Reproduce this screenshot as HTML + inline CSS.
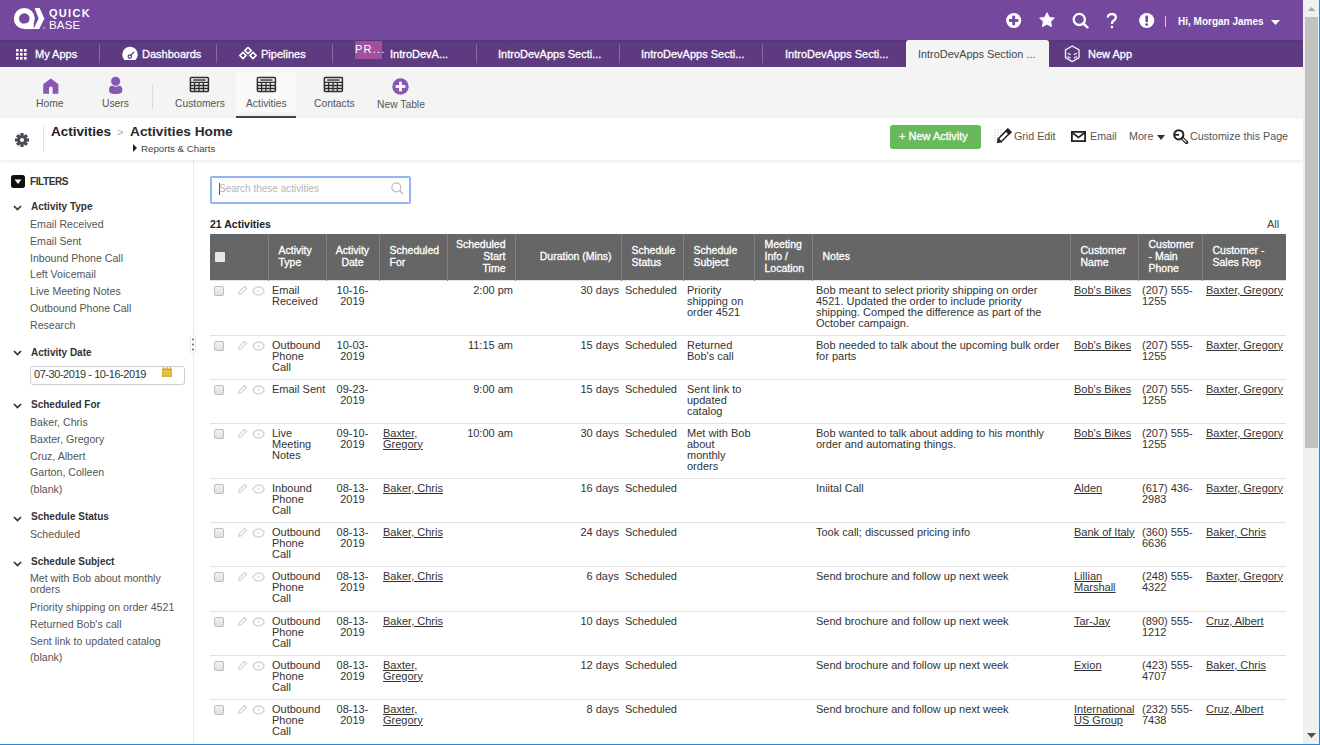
<!DOCTYPE html>
<html><head><meta charset="utf-8"><style>
*{box-sizing:border-box;margin:0;padding:0}
html,body{width:1320px;height:745px;overflow:hidden;background:#fff;font-family:"Liberation Sans",sans-serif;color:#333}
.a{position:absolute;white-space:nowrap}
#top{position:absolute;left:0;top:0;width:1303px;height:40px;background:#74489d}
#tabs{position:absolute;left:0;top:40px;width:1303px;height:27px;background:linear-gradient(#563579,#5e3a80 3px)}
#iconbar{position:absolute;left:0;top:67px;width:1303px;height:51px;background:#f4f4f4}
#phead{position:absolute;left:0;top:118px;width:1303px;height:42px;background:#fff;box-shadow:0 1px 4px rgba(0,0,0,0.10)}
#side{position:absolute;left:0;top:157px;width:194px;height:588px;border-right:1px solid #ebebeb;background:#fff}
#sb{position:absolute;left:1303px;top:0;width:16px;height:744px;background:#f0f0f0}
#thumb{position:absolute;left:1305px;top:17px;width:13px;height:431px;background:#c2c2c2}
.tt{position:absolute;color:#fff;font-size:11px;font-weight:normal;-webkit-text-stroke:0.3px #fff;white-space:nowrap;line-height:12px}
.tsep{position:absolute;top:44px;width:1px;height:19px;background:#8768a6}
.ilab{position:absolute;top:98px;font-size:10.3px;color:#555;white-space:nowrap;line-height:12px}
.act{position:absolute;top:130px;font-size:10.7px;color:#555;line-height:13px;white-space:nowrap}
.fh{position:absolute;left:31px;font-size:10px;font-weight:bold;color:#333;line-height:12px;white-space:nowrap}
.chev{position:absolute;left:13px}
.fi{position:absolute;left:30px;font-size:10.6px;color:#555;line-height:12px;white-space:nowrap}
table{position:absolute;left:210px;top:234px;border-collapse:collapse;table-layout:fixed;width:1076px}
th{background:#666;color:#fff;font-size:10.5px;font-weight:normal;-webkit-text-stroke:0.3px #fff;line-height:12px;letter-spacing:0px;height:46px;border-left:1px solid #808080;text-align:left;padding:0 0 1px 10px;vertical-align:middle;white-space:nowrap}
th:first-child{border-left:none}
td{font-size:11px;line-height:11px;vertical-align:top;padding:4px 0 0 4px;border-top:1px solid #e2e2e2;white-space:nowrap;color:#333;overflow:visible}
td u{text-decoration:underline}
td.r{text-align:right;padding-right:2px;padding-left:0}
th.r{text-align:right;padding-right:9px;padding-left:0}
.c{text-align:center;padding-left:0}
</style></head><body>
<div id="top"></div><div id="tabs"></div><div id="iconbar"></div><div id="side"></div><div id="phead"></div><div id="sb"></div><div id="thumb"></div>
<svg class="a" style="left:13px;top:7px" width="34" height="24" viewBox="0 0 34 24"><circle cx="11.3" cy="11.5" r="7.9" fill="none" stroke="#fff" stroke-width="5.2"/><rect x="11.3" y="16.5" width="9.5" height="5.6" fill="#fff"/><polygon points="21.6,1 26.6,1 31.4,11.6 26.2,22.1 20.6,22.1 25.6,11.6" fill="#fff"/><circle cx="31" cy="21" r="0.7" fill="#fff"/></svg>
<div class="a" style="left:49px;top:8px;font-size:11px;font-weight:bold;color:#fff;line-height:11px;letter-spacing:1.3px">QUICK</div>
<div class="a" style="left:49px;top:20px;font-size:11.5px;color:#fff;line-height:11px;letter-spacing:0.2px">BASE</div>
<svg class="a" style="left:1006px;top:12px" width="16" height="17" viewBox="0 0 16 17"><circle cx="7.7" cy="8.5" r="7.6" fill="#fff"/><rect x="6.3" y="3.8" width="2.8" height="9.4" fill="#74489d"/><rect x="3" y="7.1" width="9.4" height="2.8" fill="#74489d"/></svg>
<svg class="a" style="left:1039px;top:12px" width="16" height="16" viewBox="0 0 16 16"><polygon points="8.00,0.60 10.29,5.24 15.42,5.99 11.71,9.61 12.58,14.71 8.00,12.30 3.42,14.71 4.29,9.61 0.58,5.99 5.71,5.24" fill="#fff" stroke="#fff" stroke-width="0.8" stroke-linejoin="round"/></svg>
<svg class="a" style="left:1072px;top:12px" width="17" height="17" viewBox="0 0 17 17"><circle cx="7.3" cy="7.4" r="5.6" fill="none" stroke="#fff" stroke-width="2.3"/><line x1="11.2" y1="11.4" x2="15.4" y2="15.4" stroke="#fff" stroke-width="2.5" stroke-linecap="round"/></svg>
<svg class="a" style="left:1106px;top:13px" width="12" height="16" viewBox="0 0 12 16"><path d="M1.8,4.6 C1.8,2.2 3.6,1 5.7,1 C8,1 9.8,2.4 9.8,4.5 C9.8,6.4 8.4,7.2 7.2,8 C6.2,8.7 5.9,9.3 5.9,11" fill="none" stroke="#fff" stroke-width="2.3"/><circle cx="5.9" cy="14" r="1.3" fill="#fff"/></svg>
<svg class="a" style="left:1139px;top:12px" width="16" height="17" viewBox="0 0 16 17"><circle cx="7.7" cy="8.5" r="7.6" fill="#fff"/><rect x="6.4" y="3.6" width="2.6" height="6.6" rx="1" fill="#74489d"/><circle cx="7.7" cy="12.6" r="1.4" fill="#74489d"/></svg>
<div class="a" style="left:1165px;top:16px;width:1px;height:11px;background:#d8c8e6"></div>
<div class="a" style="left:1178px;top:16px;font-size:10px;font-weight:bold;color:#fff;line-height:12px">Hi, Morgan James</div>
<svg class="a" style="left:1271px;top:19.5px" width="9" height="5" viewBox="0 0 9 5"><polygon points="0,0 9,0 4.5,5" fill="#fff"/></svg>
<svg class="a" style="left:16px;top:49px" width="11" height="11" viewBox="0 0 11 11"><rect x="0" y="0" width="2.6" height="2.6" fill="#fff"/><rect x="0" y="4" width="2.6" height="2.6" fill="#fff"/><rect x="0" y="8" width="2.6" height="2.6" fill="#fff"/><rect x="4" y="0" width="2.6" height="2.6" fill="#fff"/><rect x="4" y="4" width="2.6" height="2.6" fill="#fff"/><rect x="4" y="8" width="2.6" height="2.6" fill="#fff"/><rect x="8" y="0" width="2.6" height="2.6" fill="#fff"/><rect x="8" y="4" width="2.6" height="2.6" fill="#fff"/><rect x="8" y="8" width="2.6" height="2.6" fill="#fff"/></svg>
<div class="tt" style="left:35px;top:48px">My Apps</div>
<div class="tsep" style="left:99px"></div>
<svg class="a" style="left:122px;top:46px" width="16" height="15" viewBox="0 0 16 15"><path d="M2.37,14 A7.8,7.8 0 1 1 13.63,14 Z" fill="#fff"/><circle cx="7.8" cy="10.6" r="1.7" fill="none" stroke="#5e3a80" stroke-width="1.2"/><line x1="8.9" y1="9.3" x2="11.9" y2="6.1" stroke="#5e3a80" stroke-width="1.3" stroke-linecap="round"/></svg>
<div class="tt" style="left:142px;top:48px">Dashboards</div>
<div class="tsep" style="left:216px"></div>
<svg class="a" style="left:239px;top:47px" width="18" height="13" viewBox="0 0 18 13"><rect x="6.8" y="1.2" width="4.4" height="4.4" transform="rotate(45 9 3.4)" fill="none" stroke="#fff" stroke-width="1.6"/><rect x="1.8" y="6.4" width="4.4" height="4.4" transform="rotate(45 4 8.6)" fill="none" stroke="#fff" stroke-width="1.6"/><rect x="11.8" y="6.4" width="4.4" height="4.4" transform="rotate(45 14 8.6)" fill="none" stroke="#fff" stroke-width="1.6"/></svg>
<div class="tt" style="left:261px;top:48px">Pipelines</div>
<div class="tsep" style="left:332px"></div>
<div class="a" style="left:355px;top:41px;width:27px;height:18px;background:#a24fa0"></div>
<div class="a" style="left:355px;top:44px;font-size:11px;color:#fff;letter-spacing:1.2px;line-height:11px">PR...</div>
<div class="tt" style="left:390px;top:48px">IntroDevA...</div>
<div class="tsep" style="left:476px"></div>
<div class="tt" style="left:498px;top:48px">IntroDevApps Secti...</div>
<div class="tsep" style="left:619px"></div>
<div class="tt" style="left:641px;top:48px">IntroDevApps Secti...</div>
<div class="tsep" style="left:762px"></div>
<div class="tt" style="left:785px;top:48px">IntroDevApps Secti...</div>
<div class="a" style="left:906px;top:40px;width:143px;height:27px;background:#f4f4f4;border-radius:3px 3px 0 0"></div>
<div class="a" style="left:918px;top:48px;font-size:10.9px;color:#444;line-height:12px">IntroDevApps Section ...</div>
<svg class="a" style="left:1064px;top:45px" width="17" height="18" viewBox="0 0 17 18"><polygon points="8.25,1 15,4.9 15,12.7 8.25,16.6 1.5,12.7 1.5,4.9" fill="none" stroke="#eee" stroke-width="1.4" stroke-linejoin="round"/><path d="M3.6,8.2 L6.6,9.6 M3.6,11.6 L6.6,13 M12.9,8.2 L9.9,9.6 M12.9,11.6 L9.9,13" stroke="#eee" stroke-width="1.2"/></svg>
<div class="tt" style="left:1088px;top:48px">New App</div>
<svg class="a" style="left:43px;top:78px" width="16" height="16" viewBox="0 0 16 16"><path d="M7.8,0.5 L15.4,6.3 V15.8 H9.7 V10.4 A1.85,1.85 0 0 0 6,10.4 V15.8 H0.2 V6.3 Z" fill="#8757b3"/></svg>
<div class="ilab" style="left:36px">Home</div>
<svg class="a" style="left:109px;top:76px" width="14" height="18" viewBox="0 0 14 18"><path d="M0,13.5 C0,11 1.5,9.6 4,9.6 H9.2 C11.7,9.6 13.3,11 13.3,13.5 V14.6 C13.3,16.8 11.6,17.9 9,17.9 H4.3 C1.7,17.9 0,16.8 0,14.6 Z" fill="#8757b3"/><circle cx="6.65" cy="5.3" r="5" fill="#8757b3" stroke="#f4f4f4" stroke-width="1"/></svg>
<div class="ilab" style="left:102px">Users</div>
<div class="a" style="left:152px;top:84px;width:1px;height:25px;background:#dcdcdc"></div>
<svg class="a" style="left:189px;top:76px" width="21" height="17" viewBox="0 0 21 17"><rect x="1.4" y="1.4" width="18" height="14" rx="0.8" fill="none" stroke="#2e2e2e" stroke-width="1.5"/><rect x="4.2" y="3.2" width="12.4" height="1.7" fill="#555"/><path d="M1.5,6.4 H19.4 M1.5,9.5 H19.4 M1.5,12.5 H19.4 M5.6,6.4 V15.4 M10,6.4 V15.4 M14.4,6.4 V15.4" stroke="#2e2e2e" stroke-width="1.3"/></svg>
<div class="ilab" style="left:175px">Customers</div>
<div class="a" style="left:236px;top:72px;width:60px;height:40px;background:#fafafa;border-radius:3px"></div>
<svg class="a" style="left:256px;top:76px" width="21" height="17" viewBox="0 0 21 17"><rect x="1.4" y="1.4" width="18" height="14" rx="0.8" fill="none" stroke="#2e2e2e" stroke-width="1.5"/><rect x="4.2" y="3.2" width="12.4" height="1.7" fill="#555"/><path d="M1.5,6.4 H19.4 M1.5,9.5 H19.4 M1.5,12.5 H19.4 M5.6,6.4 V15.4 M10,6.4 V15.4 M14.4,6.4 V15.4" stroke="#2e2e2e" stroke-width="1.3"/></svg>
<div class="ilab" style="left:246px">Activities</div>
<div class="a" style="left:236px;top:116px;width:60px;height:2px;background:#444"></div>
<svg class="a" style="left:323px;top:76px" width="21" height="17" viewBox="0 0 21 17"><rect x="1.4" y="1.4" width="18" height="14" rx="0.8" fill="none" stroke="#2e2e2e" stroke-width="1.5"/><rect x="4.2" y="3.2" width="12.4" height="1.7" fill="#555"/><path d="M1.5,6.4 H19.4 M1.5,9.5 H19.4 M1.5,12.5 H19.4 M5.6,6.4 V15.4 M10,6.4 V15.4 M14.4,6.4 V15.4" stroke="#2e2e2e" stroke-width="1.3"/></svg>
<div class="ilab" style="left:314px">Contacts</div>
<svg class="a" style="left:392px;top:78px" width="17" height="17" viewBox="0 0 17 17"><circle cx="8.5" cy="8.5" r="8.2" fill="#8757b3"/><rect x="7.1" y="3.6" width="2.8" height="9.8" fill="#fff"/><rect x="3.6" y="7.1" width="9.8" height="2.8" fill="#fff"/></svg>
<div class="ilab" style="left:377px;top:99px">New Table</div>
<svg class="a" style="left:15px;top:133px" width="14" height="14" viewBox="0 0 14 14"><g transform="translate(7 7)" fill="#4a4a52"><rect x="-1.6" y="-7" width="3.2" height="3.4" transform="rotate(0)"/><rect x="-1.6" y="-7" width="3.2" height="3.4" transform="rotate(45)"/><rect x="-1.6" y="-7" width="3.2" height="3.4" transform="rotate(90)"/><rect x="-1.6" y="-7" width="3.2" height="3.4" transform="rotate(135)"/><rect x="-1.6" y="-7" width="3.2" height="3.4" transform="rotate(180)"/><rect x="-1.6" y="-7" width="3.2" height="3.4" transform="rotate(225)"/><rect x="-1.6" y="-7" width="3.2" height="3.4" transform="rotate(270)"/><rect x="-1.6" y="-7" width="3.2" height="3.4" transform="rotate(315)"/><circle r="4.8"/></g><circle cx="7" cy="7" r="2" fill="#fff"/></svg>
<div class="a" style="left:43px;top:125px;width:1px;height:27px;background:#e0e0e0"></div>
<div class="a" style="left:51px;top:124px;font-size:13.5px;font-weight:bold;color:#222;line-height:16px">Activities</div>
<div class="a" style="left:117px;top:125px;font-size:11px;color:#aaa;line-height:14px">&gt;</div>
<div class="a" style="left:130px;top:124px;font-size:13.7px;font-weight:bold;color:#2a2a2a;line-height:16px">Activities Home</div>
<svg class="a" style="left:133px;top:144px" width="4" height="8" viewBox="0 0 4 8"><polygon points="0,0 4,4 0,8" fill="#222"/></svg>
<div class="a" style="left:141px;top:143px;font-size:9.7px;color:#444;line-height:12px">Reports &amp; Charts</div>
<div class="a" style="left:890px;top:125px;width:91px;height:24px;background:#67b95b;border-radius:3px"></div>
<div class="a" style="left:899px;top:130px;font-size:11px;font-weight:normal;-webkit-text-stroke:0.3px #fff;color:#fff;line-height:13px;letter-spacing:0px">+ New Activity</div>
<svg class="a" style="left:994px;top:128px" width="19" height="16" viewBox="0 0 19 16"><rect x="0.5" y="0.8" width="1.6" height="1.6" fill="#e2e2e2"/><rect x="0.5" y="3.6" width="1.6" height="1.6" fill="#e2e2e2"/><rect x="0.5" y="6.4" width="1.6" height="1.6" fill="#e2e2e2"/><rect x="0.5" y="9.2" width="1.6" height="1.6" fill="#e2e2e2"/><rect x="0.5" y="12.0" width="1.6" height="1.6" fill="#e2e2e2"/><rect x="3.3" y="0.8" width="1.6" height="1.6" fill="#e2e2e2"/><rect x="3.3" y="3.6" width="1.6" height="1.6" fill="#e2e2e2"/><rect x="3.3" y="6.4" width="1.6" height="1.6" fill="#e2e2e2"/><rect x="3.3" y="9.2" width="1.6" height="1.6" fill="#e2e2e2"/><rect x="3.3" y="12.0" width="1.6" height="1.6" fill="#e2e2e2"/><rect x="6.1" y="0.8" width="1.6" height="1.6" fill="#e2e2e2"/><rect x="6.1" y="3.6" width="1.6" height="1.6" fill="#e2e2e2"/><rect x="6.1" y="6.4" width="1.6" height="1.6" fill="#e2e2e2"/><rect x="6.1" y="9.2" width="1.6" height="1.6" fill="#e2e2e2"/><rect x="6.1" y="12.0" width="1.6" height="1.6" fill="#e2e2e2"/><g transform="translate(3.2 14.8) rotate(-45)"><rect x="3.6" y="-2.1" width="13.6" height="4.2" fill="#fff" stroke="#222" stroke-width="1.5"/><rect x="14" y="-2.85" width="3.9" height="5.7" fill="#222"/><polygon points="-0.6,0 3.6,-2.85 3.6,2.85" fill="#222"/></g></svg>
<div class="act" style="left:1014px">Grid Edit</div>
<svg class="a" style="left:1071px;top:131px" width="15" height="11" viewBox="0 0 15 11"><rect x="0.9" y="0.9" width="13.2" height="9.2" fill="none" stroke="#222" stroke-width="1.8"/><path d="M1,1.5 L7.5,6.5 L14,1.5" fill="none" stroke="#222" stroke-width="1.6"/></svg>
<div class="act" style="left:1090px">Email</div>
<div class="act" style="left:1129px">More</div>
<svg class="a" style="left:1157px;top:135px" width="8" height="5" viewBox="0 0 8 5"><polygon points="0,0 8,0 4,5" fill="#333"/></svg>
<svg class="a" style="left:1173px;top:129px" width="16" height="15" viewBox="0 0 16 15"><circle cx="5.8" cy="5.8" r="4.6" fill="none" stroke="#222" stroke-width="2"/><rect x="1.5" y="5" width="4.6" height="1.7" fill="#222"/><line x1="9.3" y1="9.3" x2="13.6" y2="13.4" stroke="#222" stroke-width="3.4" stroke-linecap="round"/><line x1="10" y1="10" x2="13" y2="12.8" stroke="#fff" stroke-width="1.1" stroke-linecap="round"/></svg>
<div class="act" style="left:1190px">Customize this Page</div>
<svg class="a" style="left:11px;top:175px" width="14" height="13" viewBox="0 0 14 13"><rect x="0" y="0" width="14" height="13" rx="2.5" fill="#111"/><polygon points="3.5,4.5 10.5,4.5 7,9" fill="#fff"/></svg>
<div class="a" style="left:30px;top:176px;font-size:10px;font-weight:bold;color:#333;line-height:12px;letter-spacing:-0.4px">FILTERS</div>
<svg class="chev a" style="top:205px" width="9" height="6" viewBox="0 0 9 6"><polyline points="1,1 4.5,4.6 8,1" fill="none" stroke="#333" stroke-width="1.7"/></svg>
<div class="fh" style="top:201px">Activity Type</div>
<div class="fi" style="top:218.0px">Email Received</div>
<div class="fi" style="top:234.8px">Email Sent</div>
<div class="fi" style="top:251.6px">Inbound Phone Call</div>
<div class="fi" style="top:268.4px">Left Voicemail</div>
<div class="fi" style="top:285.2px">Live Meeting Notes</div>
<div class="fi" style="top:302.0px">Outbound Phone Call</div>
<div class="fi" style="top:318.8px">Research</div>
<svg class="chev a" style="top:350px" width="9" height="6" viewBox="0 0 9 6"><polyline points="1,1 4.5,4.6 8,1" fill="none" stroke="#333" stroke-width="1.7"/></svg>
<div class="fh" style="top:347px">Activity Date</div>
<div class="a" style="left:30px;top:366px;width:155px;height:19px;border:1px solid #cfcfcf;border-radius:3px;background:#fff"></div>
<div class="a" style="left:34px;top:368px;font-size:11px;color:#333;line-height:12px;letter-spacing:-0.45px">07-30-2019 - 10-16-2019</div>
<svg class="a" style="left:162px;top:367px" width="10" height="10" viewBox="0 0 10 10"><rect x="0" y="1.5" width="10" height="8.5" fill="#d8a828"/><rect x="1" y="0" width="1.2" height="2.5" fill="#d8a828"/><rect x="4.4" y="0" width="1.2" height="2.5" fill="#d8a828"/><rect x="7.8" y="0" width="1.2" height="2.5" fill="#d8a828"/><path d="M0,4.5 H10 M0,7 H10 M2.5,3 V10 M5,3 V10 M7.5,3 V10" stroke="#f4dc90" stroke-width="0.6"/></svg>
<svg class="chev a" style="top:403px" width="9" height="6" viewBox="0 0 9 6"><polyline points="1,1 4.5,4.6 8,1" fill="none" stroke="#333" stroke-width="1.7"/></svg>
<div class="fh" style="top:399px">Scheduled For</div>
<div class="fi" style="top:416.0px">Baker, Chris</div>
<div class="fi" style="top:432.8px">Baxter, Gregory</div>
<div class="fi" style="top:449.6px">Cruz, Albert</div>
<div class="fi" style="top:466.4px">Garton, Colleen</div>
<div class="fi" style="top:483.2px">(blank)</div>
<svg class="chev a" style="top:516px" width="9" height="6" viewBox="0 0 9 6"><polyline points="1,1 4.5,4.6 8,1" fill="none" stroke="#333" stroke-width="1.7"/></svg>
<div class="fh" style="top:511px">Schedule Status</div>
<div class="fi" style="top:528px">Scheduled</div>
<svg class="chev a" style="top:561px" width="9" height="6" viewBox="0 0 9 6"><polyline points="1,1 4.5,4.6 8,1" fill="none" stroke="#333" stroke-width="1.7"/></svg>
<div class="fh" style="top:556px">Schedule Subject</div>
<div class="fi" style="top:573px;line-height:11px">Met with Bob about monthly<br>orders</div>
<div class="fi" style="top:601.0px">Priority shipping on order 4521</div>
<div class="fi" style="top:617.8px">Returned Bob's call</div>
<div class="fi" style="top:634.6px">Sent link to updated catalog</div>
<div class="fi" style="top:651.4px">(blank)</div>
<div class="a" style="left:190px;top:335px;width:6px;height:19px;background:#fff;border:1px solid #e8e8e8;border-radius:3px"></div>
<svg class="a" style="left:192px;top:338px" width="2" height="13" viewBox="0 0 2 13"><circle cx="1" cy="1.5" r="0.9" fill="#555"/><circle cx="1" cy="6.5" r="0.9" fill="#555"/><circle cx="1" cy="11.5" r="0.9" fill="#555"/></svg>
<div class="a" style="left:210px;top:176px;width:201px;height:28px;border:2px solid #94b6f0;border-radius:2px;background:#fff"></div>
<div class="a" style="left:219px;top:183px;width:1px;height:12px;background:#555"></div>
<div class="a" style="left:219px;top:182px;font-size:10px;color:#b5b5b5;line-height:13px">Search these activities</div>
<svg class="a" style="left:391px;top:182px" width="13" height="13" viewBox="0 0 13 13"><circle cx="5.3" cy="5.3" r="4.5" fill="none" stroke="#bbb" stroke-width="1.2"/><line x1="8.6" y1="8.6" x2="12.3" y2="12.3" stroke="#bbb" stroke-width="1.4"/></svg>
<div class="a" style="left:210px;top:218px;font-size:10.5px;font-weight:bold;color:#222;line-height:13px">21 Activities</div>
<div class="a" style="left:1267px;top:218px;font-size:11px;color:#444;line-height:13px">All</div>
<table><colgroup><col style="width:58px"><col style="width:58px"><col style="width:53px"><col style="width:68px"><col style="width:68px"><col style="width:106px"><col style="width:62px"><col style="width:71px"><col style="width:58px"><col style="width:258px"><col style="width:68px"><col style="width:64px"><col style="width:84px"></colgroup><tr><th style="padding-left:5px"><div style="width:10px;height:10px;background:#e6e6e6;border-radius:1px;margin-top:1px"></div></th><th>Activity<br>Type</th><th class="c">Activity<br>Date</th><th>Scheduled<br>For</th><th class="r">Scheduled<br>Start<br>Time</th><th class="r">Duration (Mins)</th><th>Schedule<br>Status</th><th>Schedule<br>Subject</th><th>Meeting<br>Info /<br>Location</th><th>Notes</th><th>Customer<br>Name</th><th>Customer<br>- Main<br>Phone</th><th>Customer -<br>Sales Rep</th></tr><tr style="height:55px"><td style="padding-top:5px;padding-left:5px"><div style="position:relative;height:12px"><div style="position:absolute;left:-1px;top:0px;width:10px;height:10px;border:1px solid #bdbdbd;border-radius:2px;background:linear-gradient(#f2f2f2,#e0e0e0)"></div><svg style="position:absolute;left:22px;top:-1px" width="11" height="11" viewBox="0 0 11 11"><path d="M1.6,9.4 L2.2,6.8 L7.6,1.4 L9.6,3.4 L4.2,8.8 Z" fill="none" stroke="#d6d6d6" stroke-width="1.3" stroke-linejoin="round"/></svg><svg style="position:absolute;left:37px;top:0px" width="13" height="10" viewBox="0 0 13 10"><path d="M0.9,5 C2.8,-0.2 10.2,-0.2 12.1,5 C10.2,10.2 2.8,10.2 0.9,5 Z" fill="none" stroke="#d6d6d6" stroke-width="1.5"/><circle cx="6.5" cy="5" r="0.9" fill="#d6d6d6"/></svg></div></td><td>Email<br>Received</td><td class="c">10-16-<br>2019</td><td></td><td class="r">2:00 pm</td><td class="r">30 days</td><td>Scheduled</td><td>Priority<br>shipping on<br>order 4521</td><td></td><td>Bob meant to select priority shipping on order<br>4521. Updated the order to include priority<br>shipping. Comped the difference as part of the<br>October campaign.</td><td><u>Bob's Bikes</u></td><td>(207) 555-<br>1255</td><td><u>Baxter, Gregory</u></td></tr><tr style="height:44px"><td style="padding-top:5px;padding-left:5px"><div style="position:relative;height:12px"><div style="position:absolute;left:-1px;top:0px;width:10px;height:10px;border:1px solid #bdbdbd;border-radius:2px;background:linear-gradient(#f2f2f2,#e0e0e0)"></div><svg style="position:absolute;left:22px;top:-1px" width="11" height="11" viewBox="0 0 11 11"><path d="M1.6,9.4 L2.2,6.8 L7.6,1.4 L9.6,3.4 L4.2,8.8 Z" fill="none" stroke="#d6d6d6" stroke-width="1.3" stroke-linejoin="round"/></svg><svg style="position:absolute;left:37px;top:0px" width="13" height="10" viewBox="0 0 13 10"><path d="M0.9,5 C2.8,-0.2 10.2,-0.2 12.1,5 C10.2,10.2 2.8,10.2 0.9,5 Z" fill="none" stroke="#d6d6d6" stroke-width="1.5"/><circle cx="6.5" cy="5" r="0.9" fill="#d6d6d6"/></svg></div></td><td>Outbound<br>Phone<br>Call</td><td class="c">10-03-<br>2019</td><td></td><td class="r">11:15 am</td><td class="r">15 days</td><td>Scheduled</td><td>Returned<br>Bob's call</td><td></td><td>Bob needed to talk about the upcoming bulk order<br>for parts</td><td><u>Bob's Bikes</u></td><td>(207) 555-<br>1255</td><td><u>Baxter, Gregory</u></td></tr><tr style="height:44px"><td style="padding-top:5px;padding-left:5px"><div style="position:relative;height:12px"><div style="position:absolute;left:-1px;top:0px;width:10px;height:10px;border:1px solid #bdbdbd;border-radius:2px;background:linear-gradient(#f2f2f2,#e0e0e0)"></div><svg style="position:absolute;left:22px;top:-1px" width="11" height="11" viewBox="0 0 11 11"><path d="M1.6,9.4 L2.2,6.8 L7.6,1.4 L9.6,3.4 L4.2,8.8 Z" fill="none" stroke="#d6d6d6" stroke-width="1.3" stroke-linejoin="round"/></svg><svg style="position:absolute;left:37px;top:0px" width="13" height="10" viewBox="0 0 13 10"><path d="M0.9,5 C2.8,-0.2 10.2,-0.2 12.1,5 C10.2,10.2 2.8,10.2 0.9,5 Z" fill="none" stroke="#d6d6d6" stroke-width="1.5"/><circle cx="6.5" cy="5" r="0.9" fill="#d6d6d6"/></svg></div></td><td>Email Sent</td><td class="c">09-23-<br>2019</td><td></td><td class="r">9:00 am</td><td class="r">15 days</td><td>Scheduled</td><td>Sent link to<br>updated<br>catalog</td><td></td><td></td><td><u>Bob's Bikes</u></td><td>(207) 555-<br>1255</td><td><u>Baxter, Gregory</u></td></tr><tr style="height:55px"><td style="padding-top:5px;padding-left:5px"><div style="position:relative;height:12px"><div style="position:absolute;left:-1px;top:0px;width:10px;height:10px;border:1px solid #bdbdbd;border-radius:2px;background:linear-gradient(#f2f2f2,#e0e0e0)"></div><svg style="position:absolute;left:22px;top:-1px" width="11" height="11" viewBox="0 0 11 11"><path d="M1.6,9.4 L2.2,6.8 L7.6,1.4 L9.6,3.4 L4.2,8.8 Z" fill="none" stroke="#d6d6d6" stroke-width="1.3" stroke-linejoin="round"/></svg><svg style="position:absolute;left:37px;top:0px" width="13" height="10" viewBox="0 0 13 10"><path d="M0.9,5 C2.8,-0.2 10.2,-0.2 12.1,5 C10.2,10.2 2.8,10.2 0.9,5 Z" fill="none" stroke="#d6d6d6" stroke-width="1.5"/><circle cx="6.5" cy="5" r="0.9" fill="#d6d6d6"/></svg></div></td><td>Live<br>Meeting<br>Notes</td><td class="c">09-10-<br>2019</td><td><u>Baxter,</u><br><u>Gregory</u></td><td class="r">10:00 am</td><td class="r">30 days</td><td>Scheduled</td><td>Met with Bob<br>about<br>monthly<br>orders</td><td></td><td>Bob wanted to talk about adding to his monthly<br>order and automating things.</td><td><u>Bob's Bikes</u></td><td>(207) 555-<br>1255</td><td><u>Baxter, Gregory</u></td></tr><tr style="height:44px"><td style="padding-top:5px;padding-left:5px"><div style="position:relative;height:12px"><div style="position:absolute;left:-1px;top:0px;width:10px;height:10px;border:1px solid #bdbdbd;border-radius:2px;background:linear-gradient(#f2f2f2,#e0e0e0)"></div><svg style="position:absolute;left:22px;top:-1px" width="11" height="11" viewBox="0 0 11 11"><path d="M1.6,9.4 L2.2,6.8 L7.6,1.4 L9.6,3.4 L4.2,8.8 Z" fill="none" stroke="#d6d6d6" stroke-width="1.3" stroke-linejoin="round"/></svg><svg style="position:absolute;left:37px;top:0px" width="13" height="10" viewBox="0 0 13 10"><path d="M0.9,5 C2.8,-0.2 10.2,-0.2 12.1,5 C10.2,10.2 2.8,10.2 0.9,5 Z" fill="none" stroke="#d6d6d6" stroke-width="1.5"/><circle cx="6.5" cy="5" r="0.9" fill="#d6d6d6"/></svg></div></td><td>Inbound<br>Phone<br>Call</td><td class="c">08-13-<br>2019</td><td><u>Baker, Chris</u></td><td class="r"></td><td class="r">16 days</td><td>Scheduled</td><td></td><td></td><td>Iniital Call</td><td><u>Alden</u></td><td>(617) 436-<br>2983</td><td><u>Baxter, Gregory</u></td></tr><tr style="height:44px"><td style="padding-top:5px;padding-left:5px"><div style="position:relative;height:12px"><div style="position:absolute;left:-1px;top:0px;width:10px;height:10px;border:1px solid #bdbdbd;border-radius:2px;background:linear-gradient(#f2f2f2,#e0e0e0)"></div><svg style="position:absolute;left:22px;top:-1px" width="11" height="11" viewBox="0 0 11 11"><path d="M1.6,9.4 L2.2,6.8 L7.6,1.4 L9.6,3.4 L4.2,8.8 Z" fill="none" stroke="#d6d6d6" stroke-width="1.3" stroke-linejoin="round"/></svg><svg style="position:absolute;left:37px;top:0px" width="13" height="10" viewBox="0 0 13 10"><path d="M0.9,5 C2.8,-0.2 10.2,-0.2 12.1,5 C10.2,10.2 2.8,10.2 0.9,5 Z" fill="none" stroke="#d6d6d6" stroke-width="1.5"/><circle cx="6.5" cy="5" r="0.9" fill="#d6d6d6"/></svg></div></td><td>Outbound<br>Phone<br>Call</td><td class="c">08-13-<br>2019</td><td><u>Baker, Chris</u></td><td class="r"></td><td class="r">24 days</td><td>Scheduled</td><td></td><td></td><td>Took call; discussed pricing info</td><td><u>Bank of Italy</u></td><td>(360) 555-<br>6636</td><td><u>Baker, Chris</u></td></tr><tr style="height:45px"><td style="padding-top:5px;padding-left:5px"><div style="position:relative;height:12px"><div style="position:absolute;left:-1px;top:0px;width:10px;height:10px;border:1px solid #bdbdbd;border-radius:2px;background:linear-gradient(#f2f2f2,#e0e0e0)"></div><svg style="position:absolute;left:22px;top:-1px" width="11" height="11" viewBox="0 0 11 11"><path d="M1.6,9.4 L2.2,6.8 L7.6,1.4 L9.6,3.4 L4.2,8.8 Z" fill="none" stroke="#d6d6d6" stroke-width="1.3" stroke-linejoin="round"/></svg><svg style="position:absolute;left:37px;top:0px" width="13" height="10" viewBox="0 0 13 10"><path d="M0.9,5 C2.8,-0.2 10.2,-0.2 12.1,5 C10.2,10.2 2.8,10.2 0.9,5 Z" fill="none" stroke="#d6d6d6" stroke-width="1.5"/><circle cx="6.5" cy="5" r="0.9" fill="#d6d6d6"/></svg></div></td><td>Outbound<br>Phone<br>Call</td><td class="c">08-13-<br>2019</td><td><u>Baker, Chris</u></td><td class="r"></td><td class="r">6 days</td><td>Scheduled</td><td></td><td></td><td>Send brochure and follow up next week</td><td><u>Lillian</u><br><u>Marshall</u></td><td>(248) 555-<br>4322</td><td><u>Baxter, Gregory</u></td></tr><tr style="height:44px"><td style="padding-top:5px;padding-left:5px"><div style="position:relative;height:12px"><div style="position:absolute;left:-1px;top:0px;width:10px;height:10px;border:1px solid #bdbdbd;border-radius:2px;background:linear-gradient(#f2f2f2,#e0e0e0)"></div><svg style="position:absolute;left:22px;top:-1px" width="11" height="11" viewBox="0 0 11 11"><path d="M1.6,9.4 L2.2,6.8 L7.6,1.4 L9.6,3.4 L4.2,8.8 Z" fill="none" stroke="#d6d6d6" stroke-width="1.3" stroke-linejoin="round"/></svg><svg style="position:absolute;left:37px;top:0px" width="13" height="10" viewBox="0 0 13 10"><path d="M0.9,5 C2.8,-0.2 10.2,-0.2 12.1,5 C10.2,10.2 2.8,10.2 0.9,5 Z" fill="none" stroke="#d6d6d6" stroke-width="1.5"/><circle cx="6.5" cy="5" r="0.9" fill="#d6d6d6"/></svg></div></td><td>Outbound<br>Phone<br>Call</td><td class="c">08-13-<br>2019</td><td><u>Baker, Chris</u></td><td class="r"></td><td class="r">10 days</td><td>Scheduled</td><td></td><td></td><td>Send brochure and follow up next week</td><td><u>Tar-Jay</u></td><td>(890) 555-<br>1212</td><td><u>Cruz, Albert</u></td></tr><tr style="height:44px"><td style="padding-top:5px;padding-left:5px"><div style="position:relative;height:12px"><div style="position:absolute;left:-1px;top:0px;width:10px;height:10px;border:1px solid #bdbdbd;border-radius:2px;background:linear-gradient(#f2f2f2,#e0e0e0)"></div><svg style="position:absolute;left:22px;top:-1px" width="11" height="11" viewBox="0 0 11 11"><path d="M1.6,9.4 L2.2,6.8 L7.6,1.4 L9.6,3.4 L4.2,8.8 Z" fill="none" stroke="#d6d6d6" stroke-width="1.3" stroke-linejoin="round"/></svg><svg style="position:absolute;left:37px;top:0px" width="13" height="10" viewBox="0 0 13 10"><path d="M0.9,5 C2.8,-0.2 10.2,-0.2 12.1,5 C10.2,10.2 2.8,10.2 0.9,5 Z" fill="none" stroke="#d6d6d6" stroke-width="1.5"/><circle cx="6.5" cy="5" r="0.9" fill="#d6d6d6"/></svg></div></td><td>Outbound<br>Phone<br>Call</td><td class="c">08-13-<br>2019</td><td><u>Baxter,</u><br><u>Gregory</u></td><td class="r"></td><td class="r">12 days</td><td>Scheduled</td><td></td><td></td><td>Send brochure and follow up next week</td><td><u>Exion</u></td><td>(423) 555-<br>4707</td><td><u>Baker, Chris</u></td></tr><tr style="height:44px"><td style="padding-top:5px;padding-left:5px"><div style="position:relative;height:12px"><div style="position:absolute;left:-1px;top:0px;width:10px;height:10px;border:1px solid #bdbdbd;border-radius:2px;background:linear-gradient(#f2f2f2,#e0e0e0)"></div><svg style="position:absolute;left:22px;top:-1px" width="11" height="11" viewBox="0 0 11 11"><path d="M1.6,9.4 L2.2,6.8 L7.6,1.4 L9.6,3.4 L4.2,8.8 Z" fill="none" stroke="#d6d6d6" stroke-width="1.3" stroke-linejoin="round"/></svg><svg style="position:absolute;left:37px;top:0px" width="13" height="10" viewBox="0 0 13 10"><path d="M0.9,5 C2.8,-0.2 10.2,-0.2 12.1,5 C10.2,10.2 2.8,10.2 0.9,5 Z" fill="none" stroke="#d6d6d6" stroke-width="1.5"/><circle cx="6.5" cy="5" r="0.9" fill="#d6d6d6"/></svg></div></td><td>Outbound<br>Phone<br>Call</td><td class="c">08-13-<br>2019</td><td><u>Baxter,</u><br><u>Gregory</u></td><td class="r"></td><td class="r">8 days</td><td>Scheduled</td><td></td><td></td><td>Send brochure and follow up next week</td><td><u>International</u><br><u>US Group</u></td><td>(232) 555-<br>7438</td><td><u>Cruz, Albert</u></td></tr></table>
<svg class="a" style="left:1307px;top:7px" width="9" height="5" viewBox="0 0 9 5"><polygon points="0.8,4 8.2,4 4.5,0" fill="#a8a8a8"/></svg>
<svg class="a" style="left:1307px;top:733px" width="9" height="6" viewBox="0 0 9 6"><polygon points="0,0 9,0 4.5,5" fill="#505050"/></svg>
<div class="a" style="left:1319px;top:0;width:1px;height:745px;background:#2b87d8"></div>
<div class="a" style="left:0;top:744px;width:1320px;height:1px;background:#2b87d8"></div>
</body></html>
